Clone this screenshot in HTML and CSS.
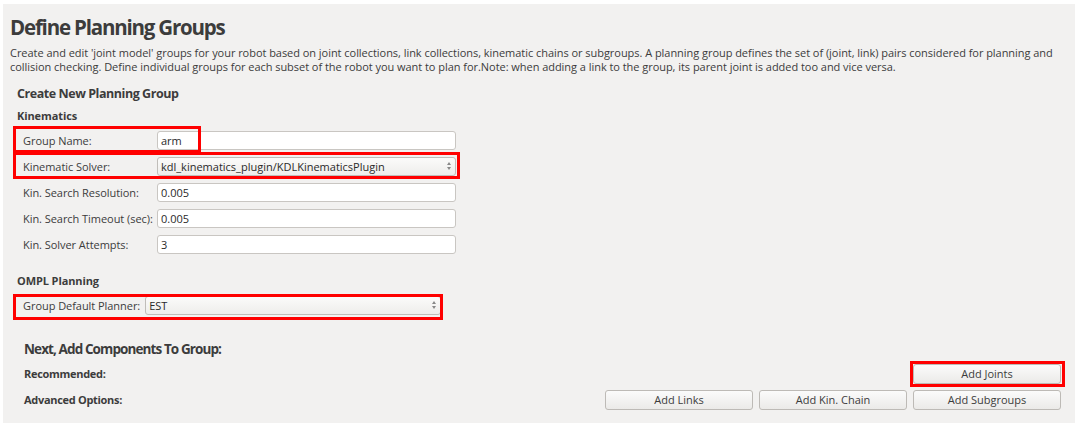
FILE: index.html
```html
<!DOCTYPE html>
<html>
<head>
<meta charset="utf-8">
<link rel="stylesheet" href="styles.css">
</head>
<body>
<div class="panel">
  <h1 class="title">Define Planning Groups</h1>
  <p class="desc">Create and edit 'joint model' groups for your robot based on joint collections, link collections, kinematic chains or subgroups. A planning group defines the set of (joint, link) pairs considered for planning and<br>collision checking. Define individual groups for each subset of the robot you want to plan for.Note: when adding a link to the group, its parent joint is added too and vice versa.</p>

  <h2 class="section">Create New Planning Group</h2>
  <h3 class="sub">Kinematics</h3>
  <div class="form">
    <div class="row"><span class="label">Group Name:</span><div class="field">arm</div></div>
    <div class="row"><span class="label">Kinematic Solver:</span><div class="field combo">kdl_kinematics_plugin/KDLKinematicsPlugin<span class="spin"><i class="up"></i><i class="down"></i></span></div></div>
    <div class="row"><span class="label">Kin. Search Resolution:</span><div class="field">0.005</div></div>
    <div class="row"><span class="label">Kin. Search Timeout (sec):</span><div class="field">0.005</div></div>
    <div class="row"><span class="label">Kin. Solver Attempts:</span><div class="field">3</div></div>
    <div class="mark mark-name"></div>
    <div class="mark mark-solver"></div>
  </div>

  <h3 class="sub ompl">OMPL Planning</h3>
  <div class="form planner">
    <div class="row"><span class="label">Group Default Planner:</span><div class="field combo wide">EST<span class="spin"><i class="up"></i><i class="down"></i></span></div></div>
    <div class="mark mark-planner"></div>
  </div>

  <div class="components">
    <h2 class="next">Next, Add Components To Group:</h2>
    <div class="brow">
      <span class="blabel">Recommended:</span>
      <div class="buttons"><button class="btn">Add Joints</button></div>
      <div class="mark mark-joints"></div>
    </div>
    <div class="brow">
      <span class="blabel">Advanced Options:</span>
      <div class="buttons"><button class="btn">Add Links</button><button class="btn">Add Kin. Chain</button><button class="btn">Add Subgroups</button></div>
    </div>
  </div>
</div>
</body>
</html>
```

FILE: styles.css
```css
html, body {
  margin: 0;
  padding: 0;
  background: #ffffff;
}
body {
  font-family: "Open Sans", "DejaVu Sans", sans-serif;
  color: #3c3c3c;
}
.panel {
  margin: 4px 5px 0 3px;
  height: 419px;
  background: #f2f1f0;
  padding: 0 0 0 7px;
  box-sizing: border-box;
  position: relative;
}
.title {
  margin: 0;
  padding-top: 10px;
  font-size: 20.5px;
  line-height: 27px;
  font-weight: 700;
  color: #3c3c3c;
  letter-spacing: -1.2px;
}
.desc {
  margin: 5px 0 0 0;
  font-size: 11px;
  line-height: 14px;
  color: #3c3c3c;
  letter-spacing: -0.04px;
  white-space: nowrap;
}
.section {
  margin: 12px 0 0 7px;
  font-size: 12.5px;
  line-height: 16px;
  font-weight: 700;
  letter-spacing: -0.45px;
}
.sub {
  margin: 7px 0 0 7px;
  font-size: 11px;
  line-height: 14px;
  font-weight: 700;
  letter-spacing: -0.1px;
}
.form {
  position: relative;
  margin-top: 8px;
  display: flex;
  flex-direction: column;
  gap: 7px;
  width: 450px;
}
.row {
  display: flex;
  align-items: center;
  height: 19px;
}
.label {
  width: 134px;
  padding-left: 13px;
  font-size: 11px;
  color: #3c3c3c;
  letter-spacing: -0.05px;
  white-space: nowrap;
}
.field {
  box-sizing: border-box;
  width: 299px;
  height: 19px;
  background: #ffffff;
  border: 1px solid #c9c6c2;
  border-radius: 3px;
  font-size: 11px;
  line-height: 17px;
  padding-left: 3px;
  color: #2a2a2a;
  position: relative;
}
.combo {
  background: linear-gradient(#fbfbfa, #eeedeb);
  border-color: #c0bdb9;
}
.spin {
  position: absolute;
  right: 4px;
  top: 4px;
  display: flex;
  flex-direction: column;
  gap: 2px;
}
.spin i {
  display: block;
  width: 0;
  height: 0;
  border-left: 2.5px solid transparent;
  border-right: 2.5px solid transparent;
}
.spin .up { border-bottom: 3px solid #888; }
.spin .down { border-top: 3px solid #888; }
.mark {
  position: absolute;
  border: 3px solid #ff0000;
  box-sizing: border-box;
}
.mark-name {
  left: 3px;
  top: -5px;
  width: 188px;
  height: 27px;
}
.mark-solver {
  left: 3px;
  top: 21px;
  width: 447px;
  height: 27px;
}
.ompl {
  margin-top: 20px;
}
.planner {
  margin-top: 8px;
}
.planner .label {
  width: auto;
  padding-right: 5px;
}
.field.wide {
  width: 296px;
}
.mark-planner {
  left: 3px;
  top: -2px;
  width: 430px;
  height: 26px;
}
.components {
  margin-top: 25px;
  padding-left: 14px;
  display: flex;
  flex-direction: column;
  gap: 5px;
}
.next {
  margin: 0;
  font-size: 13.5px;
  line-height: 18px;
  font-weight: 700;
  letter-spacing: -0.9px;
}
.brow {
  position: relative;
  display: flex;
  align-items: center;
  justify-content: space-between;
  height: 21px;
  padding-right: 14px;
}
.blabel {
  font-size: 11px;
  font-weight: 700;
  letter-spacing: -0.3px;
}
.buttons {
  display: flex;
  gap: 6px;
}
.btn {
  box-sizing: border-box;
  width: 148px;
  height: 20px;
  border: 1px solid #bdbab6;
  border-radius: 3px;
  background: linear-gradient(#fbfbfb, #ebeae8);
  font-family: "Open Sans", "DejaVu Sans", sans-serif;
  font-size: 11px;
  color: #3c3c3c;
  padding: 0;
  letter-spacing: 0;
}
.mark-joints {
  right: 10px;
  top: -2px;
  width: 155px;
  height: 26px;
}
```
